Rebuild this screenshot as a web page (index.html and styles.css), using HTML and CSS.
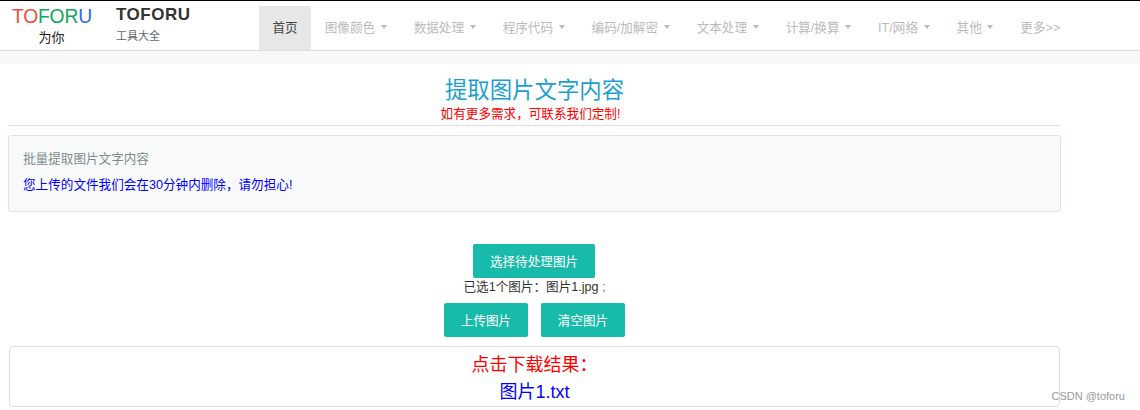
FILE: index.html
```html
<!DOCTYPE html>
<html lang="zh">
<head>
<meta charset="utf-8">
<title>提取图片文字内容</title>
<link rel="stylesheet" href="styles.css">
</head>
<body>
<header class="navbar">
  <div class="logo">
    <div class="logo-word"><span class="c-red">TO</span><span class="c-green">FOR</span><span class="c-blue">U</span></div>
    <div class="logo-sub">为你</div>
  </div>
  <div class="brand">
    <div class="brand-name">TOFORU</div>
    <div class="brand-sub">工具大全</div>
  </div>
  <nav class="nav">
    <a class="nav-item active">首页</a>
    <a class="nav-item">图像颜色<i class="caret"></i></a>
    <a class="nav-item">数据处理<i class="caret"></i></a>
    <a class="nav-item">程序代码<i class="caret"></i></a>
    <a class="nav-item">编码/加解密<i class="caret"></i></a>
    <a class="nav-item">文本处理<i class="caret"></i></a>
    <a class="nav-item">计算/换算<i class="caret"></i></a>
    <a class="nav-item">IT/网络<i class="caret"></i></a>
    <a class="nav-item">其他<i class="caret"></i></a>
    <a class="nav-item">更多&gt;&gt;</a>
  </nav>
</header>
<div class="strip"></div>
<main class="container">
  <div class="heading">
    <h1 class="title">提取图片文字内容</h1>
    <div class="subtitle">如有更多需求，可联系我们定制!</div>
  </div>
  <section class="panel">
    <p class="panel-title">批量提取图片文字内容</p>
    <p class="panel-note">您上传的文件我们会在30分钟内删除，请勿担心!</p>
  </section>
  <div class="actions">
    <button class="btn btn-wide">选择待处理图片</button>
    <div class="selected">已选1个图片：图片1.jpg <span class="sep">;</span></div>
    <div class="btn-row">
      <button class="btn">上传图片</button>
      <button class="btn">清空图片</button>
    </div>
  </div>
  <section class="result">
    <div class="result-label">点击下载结果：</div>
    <a class="result-link">图片1.txt</a>
  </section>
</main>
<div class="watermark">CSDN @toforu</div>
</body>
</html>
```
FILE: styles.css
```css
* { box-sizing: border-box; }
html, body { margin: 0; padding: 0; }
body {
  position: relative;
  height: 410px;
  overflow: hidden;
  background: #fff;
  color: #333;
  font-family: "Liberation Sans", "Noto Sans CJK SC", sans-serif;
  font-size: 12.6px;
}
.navbar {
  display: flex;
  height: 51px;
  padding-left: 12px;
  border-top: 1px solid #000;
  border-bottom: 1px solid #ddd;
  background: #fff;
}
.logo { width: 104px; text-align: center; padding-right: 25px; }
.logo-word { font-size: 19.3px; line-height: 24px; margin-top: 4px; letter-spacing: -0.2px; }
.c-red { color: #ea4f3d; }
.c-green { color: #10a860; }
.c-blue { color: #2a6fe0; }
.logo-sub { font-size: 13px; line-height: 18px; margin-top: 0; color: #222; }
.brand { width: 143px; }
.brand-name { font-size: 17px; font-weight: bold; line-height: 22px; margin-top: 3px; letter-spacing: 0.5px; color: #333; }
.brand-sub { font-size: 11px; line-height: 16px; margin-top: 2px; color: #666; }
.nav { display: flex; margin-top: 5px; height: 44px; }
.nav-item {
  display: flex;
  align-items: center;
  padding: 0 13.5px 4px;
  color: #bbb;
  font-size: 12.6px;
  white-space: nowrap;
}
.nav-item.active { background: #e7e7e7; color: #444; }
.caret {
  width: 0;
  height: 0;
  margin-left: 5.6px;
  margin-top: 2px;
  border-top: 4px solid #bbb;
  border-left: 3px solid transparent;
  border-right: 3px solid transparent;
}
.strip { height: 13px; background: #f8f8f8; }
.container { width: 1053px; margin-left: 8px; }
.heading {
  height: 62px;
  padding-top: 13px;
  border-bottom: 1px solid #ddd;
  text-align: center;
}
.title { margin: 0; font-size: 22.4px; font-weight: normal; line-height: 28px; color: #1c9fcf; }
.subtitle { font-size: 12.6px; line-height: 16px; margin-top: 1px; padding-right: 8px; color: #f00; }
.panel {
  height: 77px;
  margin-top: 9px;
  padding: 14px 14px 0;
  border: 1px solid #dbe9cf;
  border-radius: 3px;
  background: #f8fafa;
}
.panel-title { margin: 0; line-height: 18px; color: #7f8c8d; }
.panel-note { margin: 8px 0 0; line-height: 18px; color: #00f; }
.actions {
  display: flex;
  flex-direction: column;
  align-items: center;
  margin-top: 32px;
}
.btn {
  width: 84px;
  height: 34px;
  padding: 0 0 2px;
  border: 0;
  border-radius: 2px;
  background: #18bba9;
  color: #fff;
  font: inherit;
}
.btn-wide { width: 122px; margin-right: 1px; }
.selected { line-height: 18px; margin-top: 0; margin-right: 0; color: #333; }
.sep { color: #777; }
.btn-row { display: flex; gap: 13px; margin-top: 7px; margin-right: 0; }
.result {
  height: 61px;
  margin: 9px 1px 0;
  border: 1px solid #ddd;
  border-radius: 4px;
  text-align: center;
}
.result-label { font-size: 18px; line-height: 24px; margin-top: 6px; color: #f00; }
.result-link { display: block; font-size: 18px; line-height: 26px; margin-top: 2px; color: #00f; }
.watermark {
  position: absolute;
  right: 15px;
  top: 389px;
  font-size: 11px;
  line-height: 14px;
  color: #999;
}
```
